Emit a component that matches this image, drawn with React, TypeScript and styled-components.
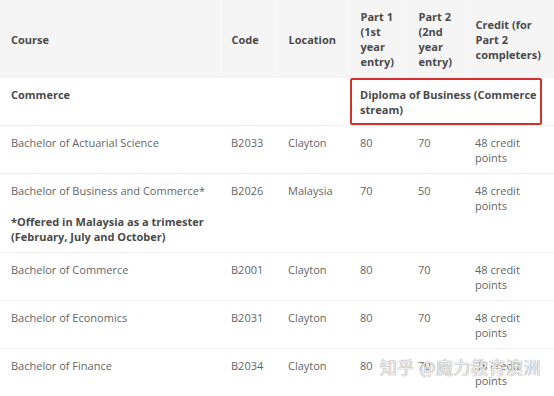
import React from "react";
import styled, { createGlobalStyle } from "styled-components";

const GlobalStyle = createGlobalStyle`
  html, body {
    margin: 0;
    padding: 0;
    background: #ffffff;
    overflow: hidden;
  }
  body {
    font-family: "Open Sans", "Noto Sans", "Noto Sans CJK SC", sans-serif;
  }
`;

type Course = {
  name: string;
  note?: string;
  code: string;
  location: string;
  part1: string;
  part2: string;
  credit: string;
};

const courses: Course[] = [
  {
    name: "Bachelor of Actuarial Science",
    code: "B2033",
    location: "Clayton",
    part1: "80",
    part2: "70",
    credit: "48 credit points",
  },
  {
    name: "Bachelor of Business and Commerce*",
    note: "*Offered in Malaysia as a trimester (February, July and October)",
    code: "B2026",
    location: "Malaysia",
    part1: "70",
    part2: "50",
    credit: "48 credit points",
  },
  {
    name: "Bachelor of Commerce",
    code: "B2001",
    location: "Clayton",
    part1: "80",
    part2: "70",
    credit: "48 credit points",
  },
  {
    name: "Bachelor of Economics",
    code: "B2031",
    location: "Clayton",
    part1: "80",
    part2: "70",
    credit: "48 credit points",
  },
  {
    name: "Bachelor of Finance",
    code: "B2034",
    location: "Clayton",
    part1: "80",
    part2: "70",
    credit: "48 credit points",
  },
];

const Page = styled.div`
  position: relative;
  width: 554px;
  height: 396px;
  overflow: hidden;
`;

const Table = styled.table`
  width: 554px;
  border-collapse: collapse;
  table-layout: fixed;
  font-size: 11px;
  line-height: 15px;
  color: #666666;
`;

const HeadCell = styled.th`
  background: #f5f5f5;
  color: #4a4a4a;
  font-weight: 700;
  text-align: left;
  vertical-align: middle;
  padding: 9px 10px 9px 11px;
  border-right: 1px solid #f9f9f9;
  &:last-child {
    border-right: none;
  }
`;

const Row = styled.tr`
  border-bottom: 1px solid #f0f0f0;
`;

const Cell = styled.td<{ $bold?: boolean }>`
  vertical-align: top;
  text-align: left;
  padding: 9px 10px 8px 11px;
  font-weight: ${(p) => (p.$bold ? 700 : 400)};
  color: ${(p) => (p.$bold ? "#4a4a4a" : "#666666")};
`;

const Highlight = styled.td`
  position: relative;
  vertical-align: top;
  padding: 9px 14px 8px 11px;
  font-weight: 700;
  color: #4a4a4a;
`;

const RedBox = styled.div`
  position: absolute;
  left: 1px;
  top: 0;
  right: 12px;
  bottom: 0;
  border: 2px solid #d7312b;
  border-radius: 2px;
  pointer-events: none;
`;

const Note = styled.p`
  margin: 16px 0 0;
  font-weight: 700;
  color: #4a4a4a;
`;

const Watermark = styled.div`
  position: absolute;
  right: 13px;
  bottom: 17px;
  font-family: "Noto Sans CJK SC", sans-serif;
  font-size: 17px;
  letter-spacing: 0.5px;
  color: rgba(255, 255, 255, 0.85);
  text-shadow: 0 0 1px #9a9a9a, 0 0 1px #9a9a9a;
`;

const widths = [220, 57, 72, 58, 57, 90];

export default function App() {
  return (
    <Page>
      <GlobalStyle />
      <Table>
        <colgroup>
          {widths.map((w, i) => (
            <col key={i} style={{ width: w }} />
          ))}
        </colgroup>
        <thead>
          <tr>
            <HeadCell>Course</HeadCell>
            <HeadCell>Code</HeadCell>
            <HeadCell>Location</HeadCell>
            <HeadCell>Part 1 (1st year entry)</HeadCell>
            <HeadCell>Part 2 (2nd year entry)</HeadCell>
            <HeadCell>Credit (for Part 2 completers)</HeadCell>
          </tr>
        </thead>
        <tbody>
          <Row>
            <Cell $bold>Commerce</Cell>
            <Cell />
            <Cell />
            <Highlight colSpan={3}>
              Diploma of Business (Commerce stream)
              <RedBox />
            </Highlight>
          </Row>
          {courses.map((c) => (
            <Row key={c.code}>
              <Cell>
                {c.name}
                {c.note ? <Note>{c.note}</Note> : null}
              </Cell>
              <Cell>{c.code}</Cell>
              <Cell>{c.location}</Cell>
              <Cell>{c.part1}</Cell>
              <Cell>{c.part2}</Cell>
              <Cell>{c.credit}</Cell>
            </Row>
          ))}
        </tbody>
      </Table>
      <Watermark>知乎 @魔力教育澳洲</Watermark>
    </Page>
  );
}
